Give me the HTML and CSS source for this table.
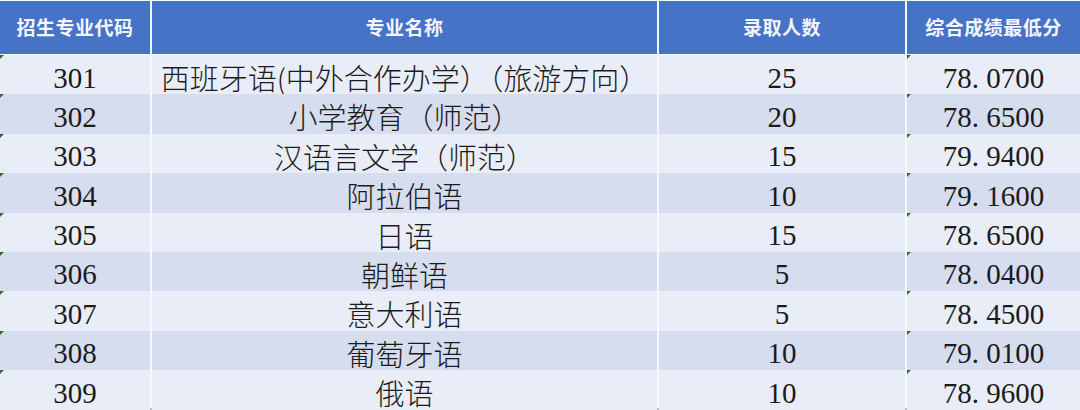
FILE: index.html
```html
<!DOCTYPE html>
<html lang="zh-CN">
<head>
<meta charset="utf-8">
<title>录取分数</title>
<link rel="stylesheet" href="styles.css">
</head>
<body>
<div class="sheet">
  <div class="row head">
    <div class="cell">招生专业代码</div>
    <div class="cell">专业名称</div>
    <div class="cell">录取人数</div>
    <div class="cell">综合成绩最低分</div>
  </div>
  <div class="row light">
    <div class="cell num mark">301</div>
    <div class="cell name">西班牙语(中外合作办学）（旅游方向）</div>
    <div class="cell num">25</div>
    <div class="cell num mark">78<span class="dot">.</span>0700</div>
  </div>
  <div class="row dark">
    <div class="cell num mark">302</div>
    <div class="cell name">小学教育（师范）</div>
    <div class="cell num">20</div>
    <div class="cell num mark">78<span class="dot">.</span>6500</div>
  </div>
  <div class="row light">
    <div class="cell num mark">303</div>
    <div class="cell name">汉语言文学（师范）</div>
    <div class="cell num">15</div>
    <div class="cell num mark">79<span class="dot">.</span>9400</div>
  </div>
  <div class="row dark">
    <div class="cell num mark">304</div>
    <div class="cell name">阿拉伯语</div>
    <div class="cell num">10</div>
    <div class="cell num mark">79<span class="dot">.</span>1600</div>
  </div>
  <div class="row light">
    <div class="cell num mark">305</div>
    <div class="cell name">日语</div>
    <div class="cell num">15</div>
    <div class="cell num mark">78<span class="dot">.</span>6500</div>
  </div>
  <div class="row dark">
    <div class="cell num mark">306</div>
    <div class="cell name">朝鲜语</div>
    <div class="cell num">5</div>
    <div class="cell num mark">78<span class="dot">.</span>0400</div>
  </div>
  <div class="row light">
    <div class="cell num mark">307</div>
    <div class="cell name">意大利语</div>
    <div class="cell num">5</div>
    <div class="cell num mark">78<span class="dot">.</span>4500</div>
  </div>
  <div class="row dark">
    <div class="cell num mark">308</div>
    <div class="cell name">葡萄牙语</div>
    <div class="cell num">10</div>
    <div class="cell num mark">79<span class="dot">.</span>0100</div>
  </div>
  <div class="row light">
    <div class="cell num mark">309</div>
    <div class="cell name">俄语</div>
    <div class="cell num">10</div>
    <div class="cell num mark">78<span class="dot">.</span>9600</div>
  </div>
</div>
</body>
</html>
```

FILE: styles.css
```css
html, body {
  margin: 0;
  padding: 0;
  background: #f4f6fb;
}
body {
  width: 1080px;
  height: 410px;
  overflow: hidden;
  font-family: "Liberation Serif", "Noto Sans CJK SC", serif;
  color: #1b1b1b;
}
.sheet {
  display: flex;
  flex-direction: column;
  gap: 1.5px;
  padding-top: 1px;
  background: #f6f8fd;
  border-bottom: 2px solid #b9bfcc;
  height: 407px;
  box-sizing: content-box;
}
.row {
  display: grid;
  grid-template-columns: 150px 505px 246px 1fr;
  column-gap: 2px;
  height: 37.9px;
}
.row.head {
  height: 52.5px;
}
.cell {
  position: relative;
  display: flex;
  align-items: center;
  justify-content: center;
  white-space: nowrap;
}
.head .cell {
  background: #4673c6;
  color: #f3f6fd;
  font-family: "Noto Sans CJK SC", sans-serif;
  font-weight: 700;
  font-size: 19px;
  letter-spacing: 0.5px;
  padding-bottom: 2px;
}
.light .cell {
  background: #e9edf7;
}
.dark .cell {
  background: #d6ddef;
}
.num {
  font-family: "Liberation Serif", serif;
  font-size: 29px;
  padding-top: 3px;
}
.dot {
  display: inline-block;
  width: 14.5px;
  text-align: left;
}
.name {
  font-family: "Noto Sans CJK SC", sans-serif;
  font-weight: 300;
  font-size: 29px;
  padding-top: 1px;
}
.mark::before {
  content: "";
  position: absolute;
  left: 0;
  top: 0;
  width: 0;
  height: 0;
  border-top: 4px solid #2f6b2f;
  border-right: 4px solid transparent;
}
```
